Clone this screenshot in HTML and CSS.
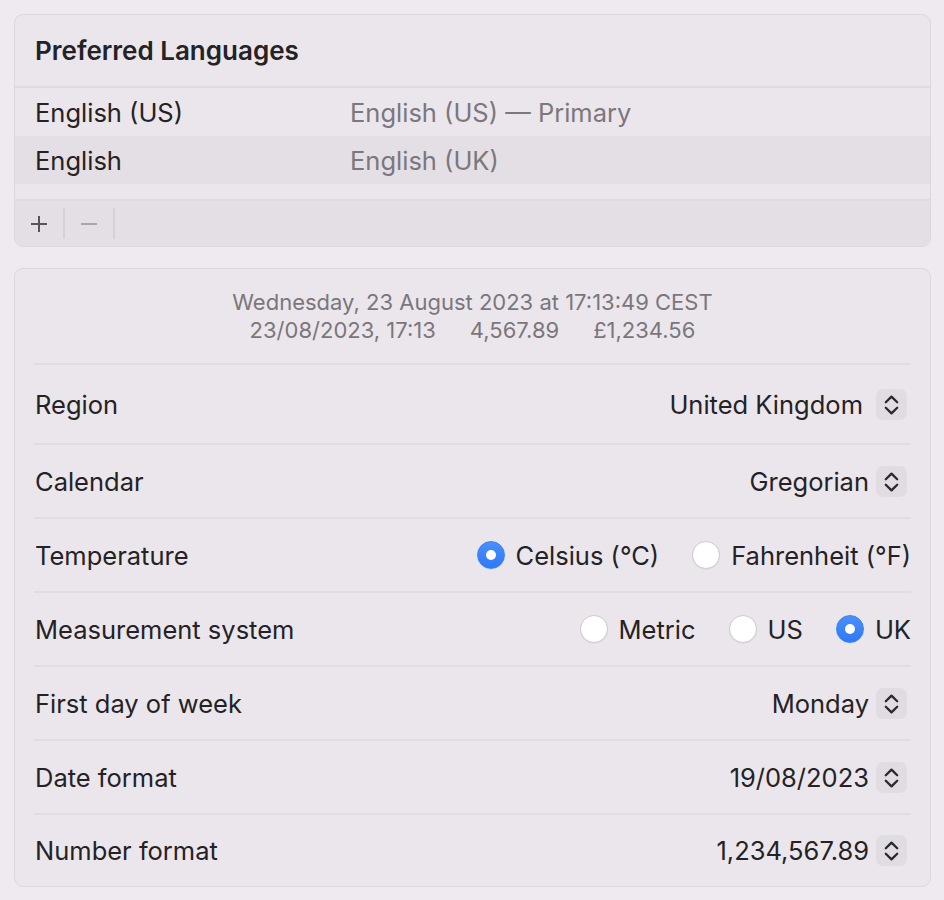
FILE: index.html
```html
<!DOCTYPE html>
<html lang="en">
<head>
<meta charset="utf-8">
<title>Language &amp; Region</title>
<link rel="stylesheet" href="styles.css">
</head>
<body>
<div class="page">
  <section class="panel langs">
    <div class="langs-header">Preferred Languages</div>
    <div class="lang-row"><span class="lang-name">English (US)</span><span class="lang-detail">English (US) — Primary</span></div>
    <div class="lang-row selected"><span class="lang-name">English</span><span class="lang-detail">English (UK)</span></div>
    <div class="lang-spacer"></div>
    <div class="toolbar">
      <span class="tool-btn"><svg width="18" height="18" viewBox="0 0 18 18"><path d="M9 1v16M1 9h16" stroke="#59555a" stroke-width="2" fill="none"/></svg></span>
      <span class="tool-sep"></span>
      <span class="tool-btn"><svg width="18" height="18" viewBox="0 0 18 18"><path d="M1 9h16" stroke="#aaa5ab" stroke-width="2" fill="none"/></svg></span>
      <span class="tool-sep"></span>
    </div>
  </section>

  <section class="panel settings">
    <div class="preview">
      <div class="preview-line">Wednesday, 23 August 2023 at 17:13:49 CEST</div>
      <div class="preview-line preview-values"><span>23/08/2023, 17:13</span><span>4,567.89</span><span>£1,234.56</span></div>
    </div>

    <div class="row row-tall">
      <span class="label">Region</span>
      <span class="popup popup-wide"><span class="popup-value">United Kingdom</span><span class="stepper"><svg width="31" height="31" viewBox="0 0 31 31"><path d="M9.8 13.3L15.5 7.6L21.2 13.3M9.8 18.7L15.5 24.4L21.2 18.7" stroke="#2b292c" stroke-width="2.3" fill="none" stroke-linecap="round" stroke-linejoin="round"/></svg></span></span>
    </div>

    <div class="row">
      <span class="label">Calendar</span>
      <span class="popup"><span class="popup-value">Gregorian</span><span class="stepper"><svg width="31" height="31" viewBox="0 0 31 31"><path d="M9.8 13.3L15.5 7.6L21.2 13.3M9.8 18.7L15.5 24.4L21.2 18.7" stroke="#2b292c" stroke-width="2.3" fill="none" stroke-linecap="round" stroke-linejoin="round"/></svg></span></span>
    </div>

    <div class="row">
      <span class="label">Temperature</span>
      <span class="radios">
        <span class="radio-opt"><span class="radio on"></span><span class="radio-label">Celsius (°C)</span></span>
        <span class="radio-opt"><span class="radio"></span><span class="radio-label">Fahrenheit (°F)</span></span>
      </span>
    </div>

    <div class="row">
      <span class="label">Measurement system</span>
      <span class="radios">
        <span class="radio-opt"><span class="radio"></span><span class="radio-label">Metric</span></span>
        <span class="radio-opt"><span class="radio"></span><span class="radio-label">US</span></span>
        <span class="radio-opt"><span class="radio on"></span><span class="radio-label">UK</span></span>
      </span>
    </div>

    <div class="row">
      <span class="label">First day of week</span>
      <span class="popup"><span class="popup-value">Monday</span><span class="stepper"><svg width="31" height="31" viewBox="0 0 31 31"><path d="M9.8 13.3L15.5 7.6L21.2 13.3M9.8 18.7L15.5 24.4L21.2 18.7" stroke="#2b292c" stroke-width="2.3" fill="none" stroke-linecap="round" stroke-linejoin="round"/></svg></span></span>
    </div>

    <div class="row">
      <span class="label">Date format</span>
      <span class="popup"><span class="popup-value">19/08/2023</span><span class="stepper"><svg width="31" height="31" viewBox="0 0 31 31"><path d="M9.8 13.3L15.5 7.6L21.2 13.3M9.8 18.7L15.5 24.4L21.2 18.7" stroke="#2b292c" stroke-width="2.3" fill="none" stroke-linecap="round" stroke-linejoin="round"/></svg></span></span>
    </div>

    <div class="row row-last">
      <span class="label">Number format</span>
      <span class="popup"><span class="popup-value">1,234,567.89</span><span class="stepper"><svg width="31" height="31" viewBox="0 0 31 31"><path d="M9.8 13.3L15.5 7.6L21.2 13.3M9.8 18.7L15.5 24.4L21.2 18.7" stroke="#2b292c" stroke-width="2.3" fill="none" stroke-linecap="round" stroke-linejoin="round"/></svg></span></span>
    </div>
  </section>
</div>
</body>
</html>
```

FILE: styles.css
```css
* { box-sizing: border-box; }

html, body {
  margin: 0;
  padding: 0;
  background: #efeaf0;
}

body {
  font-family: Inter, "Noto Sans", "Liberation Sans", sans-serif;
  font-size: 25.5px;
  color: #242225;
  -webkit-font-smoothing: antialiased;
}

.page {
  width: 944px;
  height: 900px;
  padding: 14px 13px 0 14px;
  display: flex;
  flex-direction: column;
  gap: 21px;
}

.panel {
  background: #ebe6ec;
  border: 1px solid #dcd7dd;
  border-radius: 9px;
  overflow: hidden;
}

/* Preferred languages */
.langs-header {
  height: 73px;
  padding-left: 20px;
  display: flex;
  align-items: center;
  font-weight: 600;
  font-size: 26px;
  border-bottom: 2px solid #e0dbe1;
}

.lang-row {
  height: 48px;
  display: grid;
  grid-template-columns: 315px 1fr;
  align-items: center;
  padding-left: 20px;
  padding-top: 1px;
}

.lang-row.selected {
  background: #e4dfe5;
}

.lang-detail {
  color: #7b777c;
}

.lang-spacer {
  height: 17px;
  border-bottom: 2px solid #dfdae0;
}

.toolbar {
  height: 45px;
  background: #e4dfe5;
  display: flex;
  align-items: center;
}

.tool-btn {
  width: 48px;
  height: 31px;
  display: flex;
  align-items: center;
  justify-content: center;
}

.tool-btn svg { display: block; }

.tool-sep {
  width: 2px;
  height: 31px;
  background: #d6d1d7;
}

/* Settings */
.settings {
  flex: 0 0 auto;
  padding: 0 19px;
}

.preview {
  height: 96px;
  display: flex;
  flex-direction: column;
  align-items: center;
  justify-content: center;
  color: #7a767b;
  font-size: 22px;
  line-height: 28px;
  border-bottom: 2px solid #e1dce2;
}

.preview-values {
  display: flex;
  gap: 34px;
}

.row {
  height: 74px;
  display: flex;
  align-items: center;
  justify-content: space-between;
  padding-left: 1px;
  border-bottom: 2px solid #e1dce2;
}

.row-tall { height: 80px; }

.row-last {
  height: 71px;
  border-bottom: none;
}

.popup {
  display: flex;
  align-items: center;
  gap: 7px;
  margin-right: 4px;
}

.popup-wide { gap: 13px; }

.stepper {
  width: 31px;
  height: 31px;
  border-radius: 7px;
  background: #e1dce2;
  display: flex;
}

.stepper svg { display: block; }

.radios {
  display: flex;
  align-items: center;
  gap: 33px;
}

.radio-opt {
  display: flex;
  align-items: center;
  gap: 11px;
}

.radio {
  width: 28px;
  height: 28px;
  border-radius: 50%;
  background: #ffffff;
  border: 1px solid #d0cbd1;
  box-shadow: 0 0.5px 1px rgba(0, 0, 0, 0.08);
  display: flex;
  align-items: center;
  justify-content: center;
}

.radio.on {
  background: linear-gradient(#4a8ff8, #2f79f5);
  border-color: #3b82f6;
}

.radio.on::after {
  content: "";
  width: 10px;
  height: 10px;
  border-radius: 50%;
  background: #ffffff;
}
```
